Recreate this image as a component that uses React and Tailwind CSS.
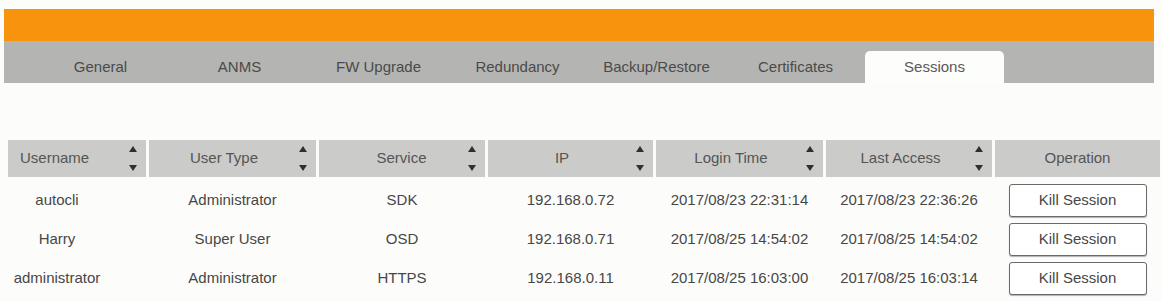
import React from 'react';

const TABS = ['General', 'ANMS', 'FW Upgrade', 'Redundancy', 'Backup/Restore', 'Certificates', 'Sessions'];

const COLUMNS = [
  { label: 'Username', sortable: true, headClass: 'justify-start pl-[12px]', textClass: 'text-left' },
  { label: 'User Type', sortable: true },
  { label: 'Service', sortable: true, headClass: 'pl-[16px]' },
  { label: 'IP', sortable: true },
  { label: 'Login Time', sortable: true },
  { label: 'Last Access', sortable: true },
  { label: 'Operation', sortable: false },
];

const SESSIONS = [
  { user: 'autocli', type: 'Administrator', service: 'SDK', ip: '192.168.0.72', login: '2017/08/23 22:31:14', last: '2017/08/23 22:36:26' },
  { user: 'Harry', type: 'Super User', service: 'OSD', ip: '192.168.0.71', login: '2017/08/25 14:54:02', last: '2017/08/25 14:54:02' },
  { user: 'administrator', type: 'Administrator', service: 'HTTPS', ip: '192.168.0.11', login: '2017/08/25 16:03:00', last: '2017/08/25 16:03:14' },
];

const GRID = 'grid grid-cols-[138px_167px_166px_165px_167px_166px_165px] gap-x-[3px]';

function SortArrows() {
  return (
    <svg width="8" height="25" viewBox="0 0 8 25" className="shrink-0">
      <polygon points="0,6 4,0 8,6" fill="#2f2f2f" />
      <polygon points="0,19 8,19 4,25" fill="#2f2f2f" />
    </svg>
  );
}

export default function App() {
  return (
    <div className="w-[1162px] h-[301px] overflow-hidden bg-[#fcfdfb] pt-[9px] font-['Liberation_Sans',Arial,sans-serif] text-[15px]">
      {/* orange header strip */}
      <div className="ml-[4px] w-[1150px] h-[32px] bg-[#f8930e]" />

      {/* tab bar */}
      <div className="ml-[4px] w-[1150px] h-[42px] bg-[#b4b5b2] flex items-end pl-[27px]">
        {TABS.map(tab => {
          const active = tab === 'Sessions';
          return (
            <div
              key={tab}
              className={
                active
                  ? 'w-[139px] h-[32px] flex items-center justify-center bg-[#fdfdfc] rounded-t-[5px] text-[#5a5a5a]'
                  : 'w-[139px] h-[32px] flex items-center justify-center text-[#4a4a4a]'
              }
            >
              {tab}
            </div>
          );
        })}
      </div>

      {/* sessions table */}
      <div className="mt-[57px] ml-[8px]">
        <div className={GRID}>
          {COLUMNS.map(col => (
            <div
              key={col.label}
              className={`h-[37px] bg-[#cbccc9] flex items-center ${col.sortable ? 'pr-[9px]' : ''} ${col.headClass || ''} text-[#555]`}
            >
              <span className={`flex-1 ${col.textClass || 'text-center'}`}>{col.label}</span>
              {col.sortable && <SortArrows />}
            </div>
          ))}
        </div>

        <div className="mt-[4px]">
          {SESSIONS.map(s => (
            <div key={s.user} className={`${GRID} h-[39px] items-center text-[#474747]`}>
              <div className="text-center pr-[40px]">{s.user}</div>
              <div className="text-center">{s.type}</div>
              <div className="text-center">{s.service}</div>
              <div className="text-center">{s.ip}</div>
              <div className="text-center">{s.login}</div>
              <div className="text-center">{s.last}</div>
              <div className="flex justify-center">
                <button className="w-[138px] h-[33px] bg-white border border-[#6a6a6a] rounded-[3px] shadow-[0_1px_1px_rgba(0,0,0,0.3)] text-[#474747]">
                  Kill Session
                </button>
              </div>
            </div>
          ))}
        </div>
      </div>
    </div>
  );
}
